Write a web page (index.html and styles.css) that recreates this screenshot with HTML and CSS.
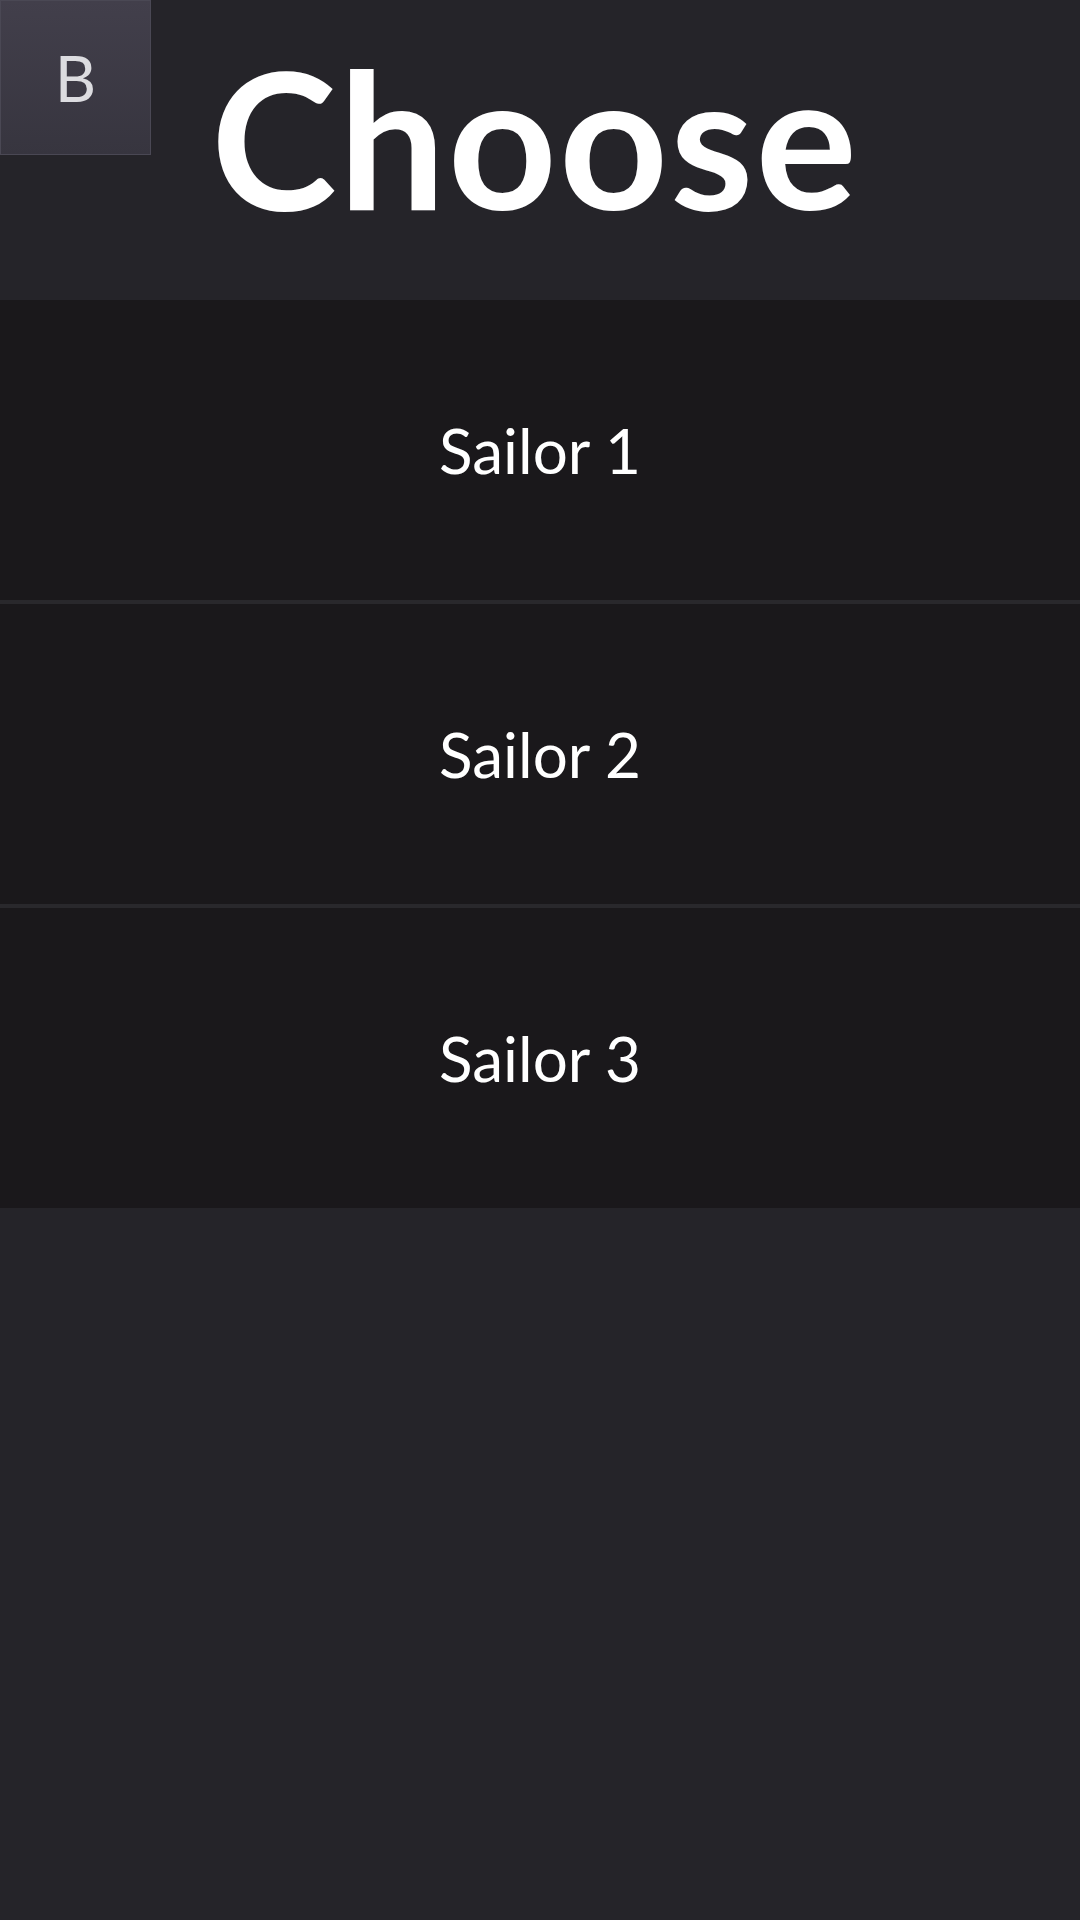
FILE: index.html
```html
<!DOCTYPE html>
<html lang="en">
<head>
<meta charset="utf-8">
<title>Choose</title>
<link rel="stylesheet" href="styles.css">
</head>
<body>
<div class="page">
  <header class="header">
    <button class="back">B</button>
    <h1 class="title">Choose</h1>
    <div class="spacer"></div>
  </header>
  <ul class="list">
    <li class="item">Sailor 1</li>
    <li class="item">Sailor 2</li>
    <li class="item">Sailor 3</li>
  </ul>
</div>
</body>
</html>
```

FILE: styles.css
```css
html, body {
  margin: 0;
  padding: 0;
  background: #252429;
}
body {
  width: 1080px;
  height: 1920px;
  font-family: Lato, "Open Sans", sans-serif;
  color: #ffffff;
}
.page {
  display: flex;
  flex-direction: column;
}
.header {
  height: 300px;
  display: grid;
  grid-template-columns: 145px 1fr 145px;
  background: #252429;
}
.back {
  align-self: start;
  width: 151px;
  height: 155px;
  margin: 0;
  padding: 0;
  border: 1px solid #4a4854;
  background: linear-gradient(#423f4b, #37353f);
  color: #dcdce0;
  font-family: Lato, sans-serif;
  font-weight: 400;
  font-size: 64px;
  line-height: 1;
  display: flex;
  align-items: center;
  justify-content: center;
  box-sizing: border-box;
}
.title {
  margin: 0;
  text-align: center;
  font-size: 190px;
  font-weight: 700;
  line-height: 1;
  padding-top: 41px;
  padding-right: 10px;
  letter-spacing: 2px;
}
.list {
  list-style: none;
  margin: 0;
  padding: 0;
  display: flex;
  flex-direction: column;
  gap: 4px;
  background: #29282c;
}
.item {
  height: 300px;
  background: #1a181b;
  display: flex;
  align-items: center;
  justify-content: center;
  font-size: 62px;
  font-weight: 400;
}
```
